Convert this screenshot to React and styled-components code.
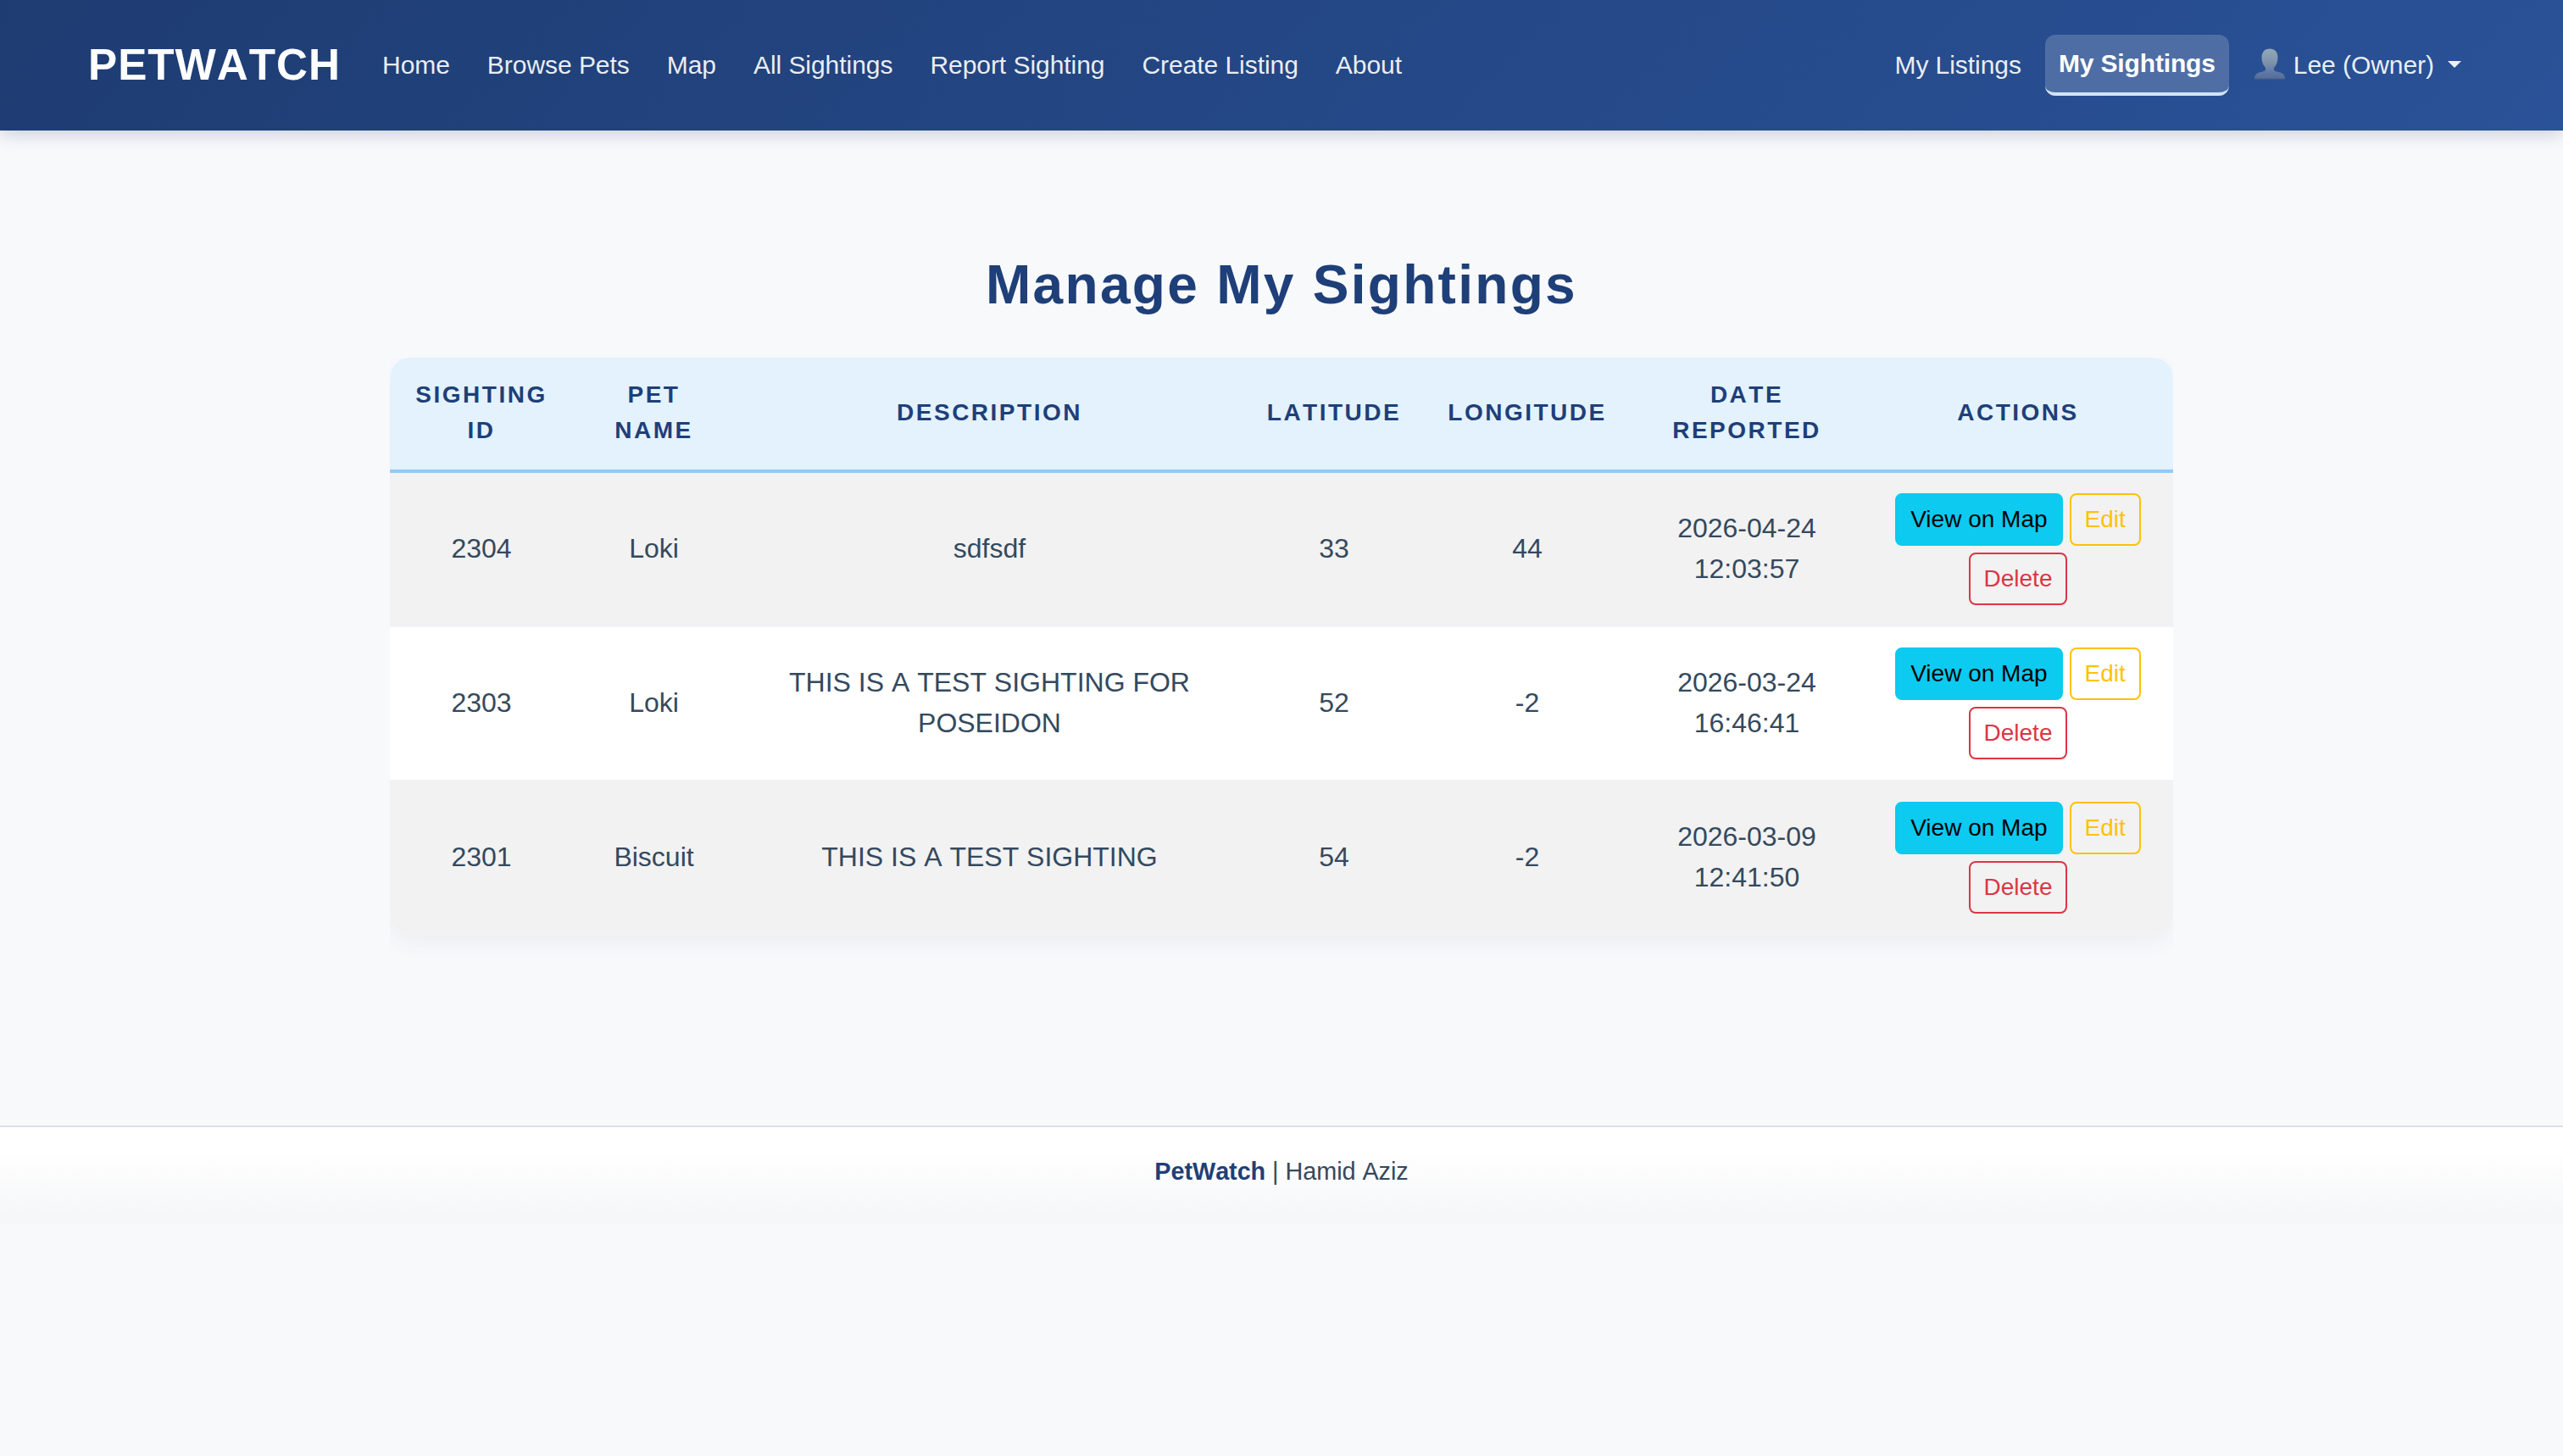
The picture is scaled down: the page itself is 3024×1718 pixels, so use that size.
import styled, { createGlobalStyle, css } from "styled-components";

const mainLinks = [
  "Home",
  "Browse Pets",
  "Map",
  "All Sightings",
  "Report Sighting",
  "Create Listing",
  "About",
];

const columns = [
  "Sighting ID",
  "Pet Name",
  "Description",
  "Latitude",
  "Longitude",
  "Date Reported",
  "Actions",
];

const sightings = [
  {
    id: 2304,
    pet: "Loki",
    description: "sdfsdf",
    latitude: 33,
    longitude: 44,
    reported: "2026-04-24 12:03:57",
  },
  {
    id: 2303,
    pet: "Loki",
    description: "THIS IS A TEST SIGHTING FOR POSEIDON",
    latitude: 52,
    longitude: -2,
    reported: "2026-03-24 16:46:41",
  },
  {
    id: 2301,
    pet: "Biscuit",
    description: "THIS IS A TEST SIGHTING",
    latitude: 54,
    longitude: -2,
    reported: "2026-03-09 12:41:50",
  },
];

function UserIcon() {
  return (
    <StyledUserIcon viewBox="0 0 36 37" aria-hidden="true">
      <defs>
        <linearGradient id="bust" x1="0" y1="0" x2="0" y2="1">
          <stop offset="0" stopColor="#93a9b8" />
          <stop offset="0.45" stopColor="#7d93ab" />
          <stop offset="0.8" stopColor="#5c76a4" />
          <stop offset="0.94" stopColor="#566f9f" />
          <stop offset="1" stopColor="#3d5273" />
        </linearGradient>
      </defs>
      <path
        fill="url(#bust)"
        d="M18 0.500c5.800 0 9.500 3.900 9.500 10 0 5-1.300 8.800-3.600 11.300-1.200 1.300-1.600 4.200.3 5 2.600 1 6.600 1.300 9 2.900 2 1.300 2.800 3.800 2.800 7.300H0c0-3.500.8-6 2.800-7.300 2.400-1.600 6.400-1.900 9-2.900 1.900-.8 1.500-3.700.3-5-2.300-2.500-3.600-6.300-3.600-11.300 0-6.100 3.700-10 9.500-10z"
      />
    </StyledUserIcon>
  );
}

function Navbar() {
  return (
    <StyledNavbar>
      <Brand href="#">PETWATCH</Brand>
      <NavList>
        {mainLinks.map((link) => (
          <li key={link}>
            <NavLink href="#">{link}</NavLink>
          </li>
        ))}
      </NavList>
      <NavList $end>
        <li>
          <NavLink href="#">My Listings</NavLink>
        </li>
        <li>
          <NavLink href="#" $active>
            My Sightings
          </NavLink>
        </li>
        <li>
          <NavLink href="#">
            <UserIcon />
            Lee (Owner)
            <Caret />
          </NavLink>
        </li>
      </NavList>
    </StyledNavbar>
  );
}

function SightingRow({ sighting }) {
  return (
    <tr>
      <Cell>{sighting.id}</Cell>
      <Cell>{sighting.pet}</Cell>
      <Cell>{sighting.description}</Cell>
      <Cell>{sighting.latitude}</Cell>
      <Cell>{sighting.longitude}</Cell>
      <Cell>{sighting.reported}</Cell>
      <ActionsCell>
        <Actions>
          <Button $variant="info">View on Map</Button>
          <Button $variant="warning">Edit</Button>
          <Button $variant="danger">Delete</Button>
        </Actions>
      </ActionsCell>
    </tr>
  );
}

export default function App() {
  return (
    <>
      <GlobalStyle />
      <Navbar />
      <Main>
        <Title>Manage My Sightings</Title>
        <TableWrapper>
          <Table>
            <colgroup>
              <Col $width={216} />
              <Col $width={191} />
              <Col $width={601} />
              <Col $width={212} />
              <Col $width={244} />
              <Col $width={274} />
              <Col $width={366} />
            </colgroup>
            <thead>
              <tr>
                {columns.map((column) => (
                  <HeadCell key={column}>{column}</HeadCell>
                ))}
              </tr>
            </thead>
            <tbody>
              {sightings.map((sighting) => (
                <SightingRow key={sighting.id} sighting={sighting} />
              ))}
            </tbody>
          </Table>
        </TableWrapper>
      </Main>
      <Footer>
        <strong>PetWatch</strong> | Hamid Aziz
      </Footer>
    </>
  );
}

const GlobalStyle = createGlobalStyle`
  *,
  *::before,
  *::after {
    box-sizing: border-box;
  }

  body {
    margin: 0;
    min-height: 100vh;
    background: #f8f9fb;
    color: #34495e;
    font-family: "Liberation Sans", Arial, sans-serif;
    font-size: 32px;
    line-height: 1.5;
    font-kerning: none;
  }
`;

const StyledNavbar = styled.nav`
  position: relative;
  display: flex;
  align-items: center;
  height: 154px;
  padding: 0 104px;
  background: linear-gradient(135deg, #1e3c72, #2a5298);
  box-shadow: 0 4px 20px rgba(30, 60, 114, 0.22);
`;

const Brand = styled.a`
  margin-right: 33px;
  color: #ffffff;
  font-size: 51.2px;
  font-weight: 700;
  letter-spacing: 1px;
  text-decoration: none;
`;

const NavList = styled.ul`
  display: flex;
  align-items: center;
  gap: 12px;
  margin: 0;
  margin-left: ${({ $end }) => ($end ? "auto" : "0")};
  padding: 0;
  list-style: none;
`;

const NavLink = styled.a`
  display: flex;
  align-items: center;
  padding: 12px 16px;
  border-radius: 12px;
  color: rgba(255, 255, 255, 0.92);
  font-size: 30px;
  line-height: 44px;
  letter-spacing: -0.05px;
  text-decoration: none;
  white-space: nowrap;

  ${({ $active }) =>
    $active &&
    css`
      border-bottom: 4px solid #d3e3f5;
      background: rgba(255, 255, 255, 0.18);
      color: #ffffff;
      font-weight: 700;
      letter-spacing: -0.15px;
    `}
`;

const StyledUserIcon = styled.svg`
  width: 36px;
  height: 37px;
  margin: 0 10px 3px 2px;
`;

const Caret = styled.span`
  margin-left: 16px;
  margin-bottom: 3px;
  border-top: 8px solid;
  border-right: 8px solid transparent;
  border-left: 8px solid transparent;
`;

const Main = styled.main`
  width: 2104px;
  margin: 0 auto;
  padding-top: 143px;
`;

const Title = styled.h1`
  margin: 0 0 47px;
  color: #1e3f78;
  font-size: 64px;
  font-weight: 700;
  line-height: 78px;
  letter-spacing: 2.3px;
  text-align: center;
`;

/* clips the table shadow at both sides, leaves room for it below */
const TableWrapper = styled.div`
  overflow: hidden;
  padding-bottom: 64px;
`;

const Table = styled.table`
  width: 100%;
  overflow: hidden;
  border-collapse: separate;
  border-spacing: 0;
  border-radius: 24px;
  background: #ffffff;
  box-shadow: 0 8px 24px rgba(30, 60, 114, 0.06);
  table-layout: fixed;
  text-align: center;

  tbody tr:nth-of-type(odd) {
    background: #f2f2f2;
  }
`;

const Col = styled.col`
  width: ${({ $width }) => $width}px;
`;

const HeadCell = styled.th`
  padding: 23px 26px 25px;
  border-bottom: 4px solid #90caf9;
  background: #e3f2fd;
  color: #1e3f78;
  font-size: 28px;
  font-weight: 700;
  line-height: 42px;
  letter-spacing: 2.5px;
  text-transform: uppercase;
`;

const Cell = styled.td`
  height: 182px;
  padding: 24px 32px 26px;
  border-bottom: 2px solid #f1f3f8;
  line-height: 48px;
  vertical-align: middle;
`;

const ActionsCell = styled(Cell)`
  padding-bottom: 24px;
`;

const Actions = styled.div`
  display: flex;
  flex-wrap: wrap;
  justify-content: center;
  gap: 8px;
`;

const variants = {
  info: css`
    border-color: #0dcaf0;
    background: #0dcaf0;
    color: #000000;
  `,
  warning: css`
    border-color: #ffc107;
    color: #ffc107;
  `,
  danger: css`
    border-color: #dc3545;
    color: #dc3545;
  `,
};

const Button = styled.button`
  padding: 8px 16px;
  border: 2px solid;
  border-radius: 8px;
  background: transparent;
  font-family: inherit;
  font-size: 28px;
  line-height: 42px;
  ${({ $variant }) => variants[$variant]}
`;

const Footer = styled.footer`
  height: 116px;
  margin-top: 160px;
  padding-top: 31px;
  border-top: 2px solid #d8dee9;
  background: linear-gradient(180deg, #ffffff 20%, #f5f6f8);
  font-size: 28.8px;
  line-height: 43px;
  letter-spacing: -0.05px;
  text-align: center;

  strong {
    color: #1e3f78;
  }
`;
